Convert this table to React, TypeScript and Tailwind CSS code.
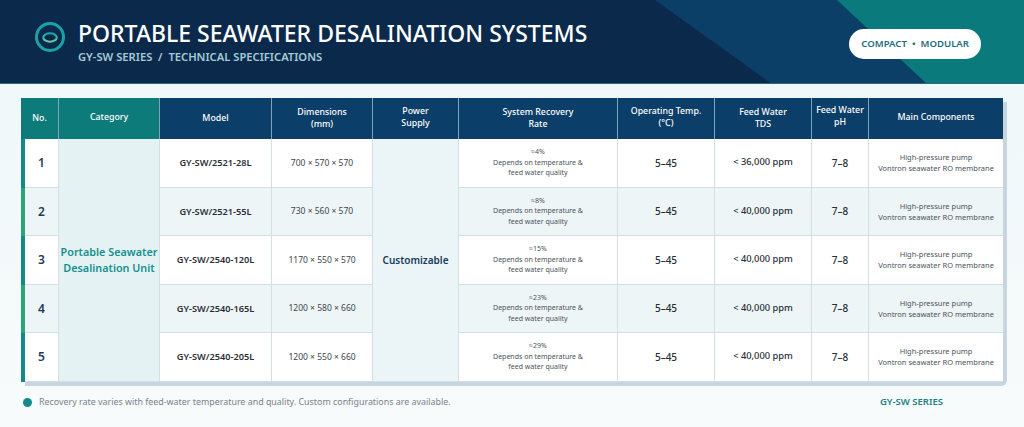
import React from "react";

const rows = [
  { no: "1", model: "GY-SW/2521-28L", dim: "700 × 570 × 570", rate: "≈4%", tds: "< 36,000 ppm", accent: "bg-[#12898b]", bg: "bg-white", h: "h-[49px]" },
  { no: "2", model: "GY-SW/2521-55L", dim: "730 × 560 × 570", rate: "≈8%", tds: "< 40,000 ppm", accent: "bg-[#2aa57a]", bg: "bg-[#edf5f7]", h: "h-[48px]" },
  { no: "3", model: "GY-SW/2540-120L", dim: "1170 × 550 × 570", rate: "≈15%", tds: "< 40,000 ppm", accent: "bg-[#12898b]", bg: "bg-white", h: "h-[49px]" },
  { no: "4", model: "GY-SW/2540-165L", dim: "1200 × 580 × 660", rate: "≈23%", tds: "< 40,000 ppm", accent: "bg-[#2aa57a]", bg: "bg-[#edf5f7]", h: "h-[48px]" },
  { no: "5", model: "GY-SW/2540-205L", dim: "1200 × 550 × 660", rate: "≈29%", tds: "< 40,000 ppm", accent: "bg-[#12898b]", bg: "bg-white", h: "h-[49px]" },
];

const cellB = "border-r border-b border-[#d2dfe6]";
const headB = "border-r border-[#7fa2bd]";

export default function App() {
  return (
    <div className="w-[1024px] h-[427px] overflow-hidden bg-gradient-to-b from-[#edf7f8] to-[#f8fbfc]" style={{ fontFamily: '"Noto Sans", "Open Sans", sans-serif' }}>
      {/* Header */}
      <div className="relative h-[84px] bg-[#0b2a4b] overflow-hidden border-b border-[#2b6a7e]">
        <svg className="absolute inset-0" width="1024" height="84" viewBox="0 0 1024 84" preserveAspectRatio="none">
          <polygon points="655,0 1024,0 1024,84 772,84" fill="#0c3f67" />
          <polygon points="837,0 1024,0 1024,84 927,84" fill="#0b7a7d" />
        </svg>
        <div className="relative flex items-start h-full pl-[33px] pr-[43px]">
          <svg width="34" height="34" viewBox="0 0 34 34" className="mr-[11px] mt-[20px]">
            <defs>
              <linearGradient id="lg" x1="0" y1="0" x2="0" y2="1">
                <stop offset="0" stopColor="#1aa6a6" />
                <stop offset="1" stopColor="#6cc9a4" />
              </linearGradient>
            </defs>
            <circle cx="17" cy="17" r="13.5" fill="none" stroke="#1aa3a5" strokeWidth="3" />
            <ellipse cx="17" cy="17.5" rx="6.8" ry="4.2" fill="none" stroke="url(#lg)" strokeWidth="2" />
          </svg>
          <div className="flex flex-col mt-[19px]">
            <div className="text-white text-[23px] leading-[28px] font-medium">PORTABLE SEAWATER DESALINATION SYSTEMS</div>
            <div className="text-[#a3cbd9] text-[11.2px] leading-[16px] font-semibold mt-[2px]">GY-SW SERIES&nbsp; /&nbsp; TECHNICAL SPECIFICATIONS</div>
          </div>
          <div className="ml-auto mt-[29px] h-[30px] px-[12px] rounded-full bg-white flex items-center text-[#1c6e7a] text-[9.6px] font-semibold">
            COMPACT&nbsp; •&nbsp; MODULAR
          </div>
        </div>
      </div>

      {/* Table */}
      <div className="pl-[21px] pt-[14px]">
        <div className="w-[982px] rounded-br-[6px] shadow-[4px_4px_0_0_#c7d5de]">
          <table className="table-fixed border-separate border-spacing-0 w-[982px] text-center">
            <colgroup>
              <col className="w-[4px]" />
              <col className="w-[34px]" />
              <col className="w-[101px]" />
              <col className="w-[112px]" />
              <col className="w-[101px]" />
              <col className="w-[86px]" />
              <col className="w-[159px]" />
              <col className="w-[97px]" />
              <col className="w-[97px]" />
              <col className="w-[57px]" />
              <col className="w-[134px]" />
            </colgroup>
            <thead>
              <tr className="h-[41px] text-white text-[8.8px] leading-[11.5px]">
                <th colSpan={2} className={`bg-[#0e7b7b] font-medium ${headB}`}>No.</th>
                <th className={`bg-[#0e7b7b] font-medium pb-[2px] ${headB}`}>Category</th>
                <th className={`bg-[#0b3e68] font-medium ${headB}`}>Model</th>
                <th className={`bg-[#0b3e68] font-medium ${headB}`}>Dimensions<br />(mm)</th>
                <th className={`bg-[#0b3e68] font-medium pb-[2px] ${headB}`}>Power<br />Supply</th>
                <th className={`bg-[#0b3e68] font-medium ${headB}`}>System Recovery<br />Rate</th>
                <th className={`bg-[#0b3e68] font-medium pb-[2px] ${headB}`}>Operating Temp.<br />(°C)</th>
                <th className={`bg-[#0b3e68] font-medium ${headB}`}>Feed Water<br />TDS</th>
                <th className={`bg-[#0b3e68] font-medium pb-[4px] ${headB}`}>Feed Water<br />pH</th>
                <th className="bg-[#0b3e68] font-medium pb-[2px]">Main Components</th>
              </tr>
            </thead>
            <tbody>
              {rows.map((r, i) => (
                <tr key={r.no} className={r.h}>
                  <td className={r.accent}></td>
                  <td className={`${r.bg} ${cellB} text-[12px] font-semibold text-[#1d3a58]`}>{r.no}</td>
                  {i === 0 && (
                    <td rowSpan={5} className={`bg-[#e4f2f3] ${cellB} text-[10.8px] leading-[16.5px] font-semibold text-[#16908f] whitespace-nowrap`}>
                      Portable Seawater
                      <br />
                      Desalination Unit
                    </td>
                  )}
                  <td className={`${r.bg} ${cellB} text-[9.2px] font-semibold text-[#2a2f36]`}>{r.model}</td>
                  <td className={`${r.bg} ${cellB} text-[8.5px] text-[#3e454d]`}>{r.dim}</td>
                  {i === 0 && (
                    <td rowSpan={5} className={`bg-[#ebf4f6] ${cellB} text-[10px] font-semibold text-[#173b5c]`}>
                      Customizable
                    </td>
                  )}
                  <td className={`${r.bg} ${cellB} text-[7px] leading-[10.5px] text-[#4b535b]`}>
                    <div>{r.rate}</div>
                    <div>Depends on temperature &amp;</div>
                    <div>feed water quality</div>
                  </td>
                  <td className={`${r.bg} ${cellB} text-[10px] font-medium text-[#2a2f36]`}>5–45</td>
                  <td className={`${r.bg} ${cellB} text-[9.3px] font-medium text-[#2a2f36] pb-[2px]`}>{r.tds}</td>
                  <td className={`${r.bg} ${cellB} text-[10px] font-medium text-[#2a2f36]`}>7–8</td>
                  <td className={`${r.bg} border-b border-[#d2dfe6] text-[7.5px] leading-[11px] text-[#4b535b]`}>
                    <div>High-pressure pump</div>
                    <div>Vontron seawater RO membrane</div>
                  </td>
                </tr>
              ))}
            </tbody>
          </table>
        </div>
      </div>

      {/* Footer */}
      <div className="flex items-center pl-[23px] pr-[81px] mt-[13px]">
        <div className="w-[9px] h-[9px] rounded-full bg-[#13898b] mr-[7px]"></div>
        <div className="text-[8.9px] text-[#7a8189]">Recovery rate varies with feed-water temperature and quality. Custom configurations are available.</div>
        <div className="ml-auto text-[9.5px] font-semibold text-[#1a7f85]">GY-SW SERIES</div>
      </div>
    </div>
  );
}
